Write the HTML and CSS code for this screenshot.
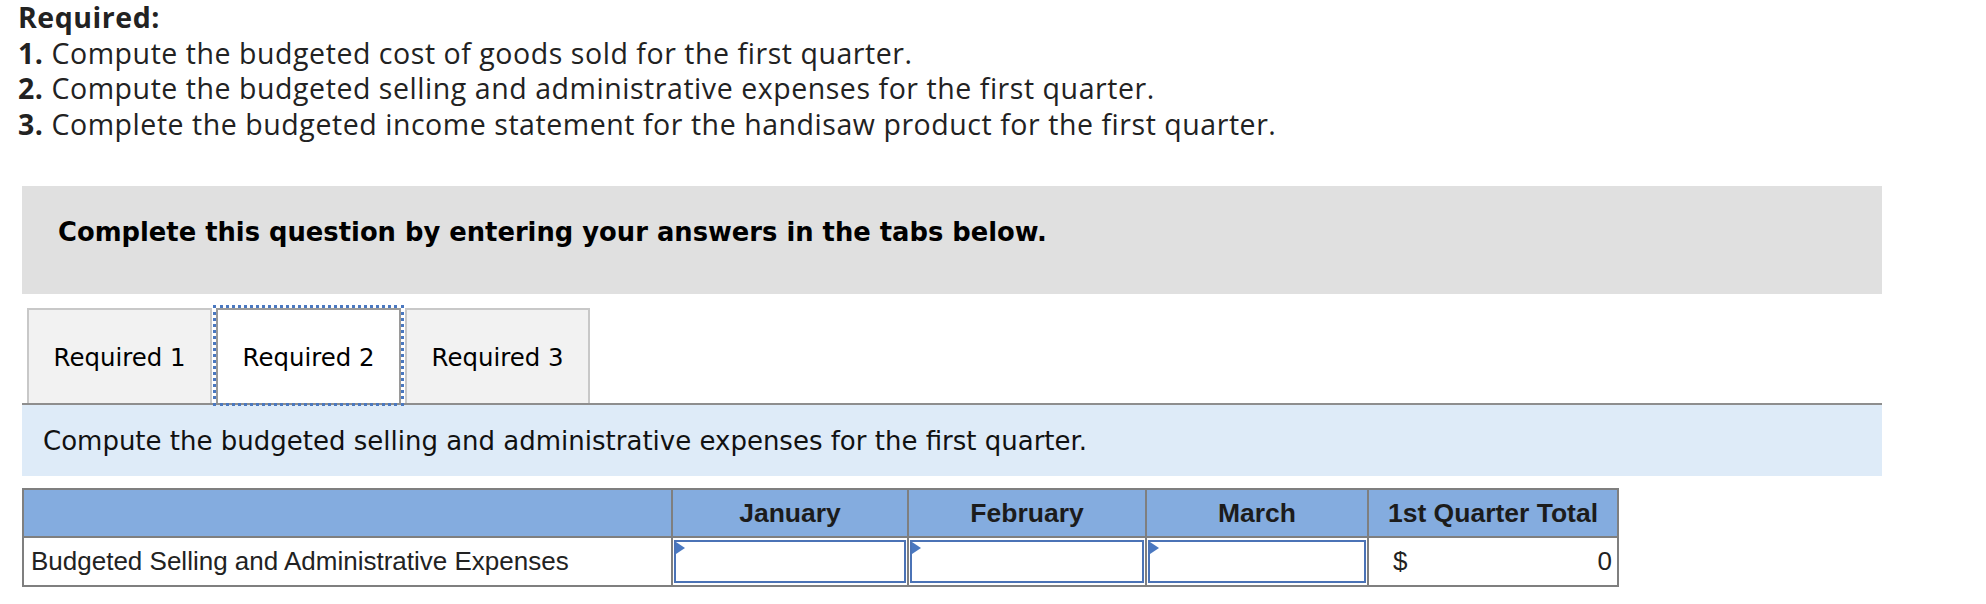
FILE: index.html
```html
<!DOCTYPE html>
<html>
<head>
<meta charset="utf-8">
<link rel="stylesheet" href="styles.css">
</head>
<body>
<div class="page">
  <div class="required">
    <div class="req-title">Required:</div>
    <div class="req-line"><b>1.</b> Compute the budgeted cost of goods sold for the first quarter.</div>
    <div class="req-line"><b>2.</b> Compute the budgeted selling and administrative expenses for the first quarter.</div>
    <div class="req-line"><b>3.</b> Complete the budgeted income statement for the handisaw product for the first quarter.</div>
  </div>
  <div class="notice">Complete this question by entering your answers in the tabs below.</div>
  <div class="tabs">
    <div class="tab">Required 1</div>
    <div class="tab active">Required 2</div>
    <div class="tab">Required 3</div>
  </div>
  <div class="band">Compute the budgeted selling and administrative expenses for the first quarter.</div>
  <table class="grid">
    <thead>
      <tr>
        <th class="c-label"></th>
        <th class="c-jan">January</th>
        <th class="c-feb">February</th>
        <th class="c-mar">March</th>
        <th class="c-tot">1st Quarter Total</th>
      </tr>
    </thead>
    <tbody>
      <tr>
        <td class="label">Budgeted Selling and Administrative Expenses</td>
        <td class="entry"><span class="field"></span></td>
        <td class="entry"><span class="field"></span></td>
        <td class="entry"><span class="field"></span></td>
        <td class="total"><div class="total-in"><span>$</span><span>0</span></div></td>
      </tr>
    </tbody>
  </table>
</div>
</body>
</html>
```

FILE: styles.css
```css
html, body {
  margin: 0;
  padding: 0;
  background: #ffffff;
}

.page {
  padding-left: 22px;
  width: 1860px;
}

.required {
  margin-left: -4px;
  font-family: "Open Sans", Lato, sans-serif;
  font-size: 28.5px;
  letter-spacing: 0.55px;
  line-height: 35.5px;
  color: #222222;
}

.req-title,
.req-line b {
  font-weight: 700;
}

.notice {
  margin-top: 44px;
  height: 108px;
  box-sizing: border-box;
  padding: 31px 36px 0;
  background: #e0e0e0;
  font-family: "DejaVu Sans", Verdana, sans-serif;
  font-weight: 700;
  font-size: 25.8px;
  line-height: 30px;
  color: #000000;
}

.tabs {
  display: flex;
  align-items: flex-end;
  margin-top: 14px;
  padding-left: 5px;
}

.tab {
  width: 185px;
  height: 95px;
  box-sizing: border-box;
  border: 2px solid #c8c8c8;
  border-bottom: none;
  background: #f2f2f2;
  display: flex;
  align-items: center;
  justify-content: center;
  padding-top: 2px;
  font-family: "DejaVu Sans", Verdana, sans-serif;
  font-size: 24.4px;
  color: #000000;
}

.tab.active {
  margin: 0 4px;
  background: #ffffff;
  border-color: #9a9a9a;
  outline: 3px dotted #4a78c0;
  outline-offset: 0;
  position: relative;
  z-index: 1;
}

.band {
  height: 73px;
  box-sizing: border-box;
  border-top: 2px solid #8e8e8e;
  background: #deebf8;
  padding-left: 21px;
  display: flex;
  align-items: center;
  font-family: "DejaVu Sans", Verdana, sans-serif;
  font-size: 26px;
  color: #111111;
}

.grid {
  margin-top: 12px;
  border-collapse: collapse;
  table-layout: fixed;
  border: 2px solid #7f7f7f;
  font-family: "Liberation Sans", Arial, sans-serif;
  font-size: 26px;
  color: #222222;
}

.grid th,
.grid td {
  border: 2px solid #7f7f7f;
  padding: 0;
}

.grid th {
  height: 46px;
  background: #84acdf;
  font-weight: 700;
  font-size: 26.5px;
  text-align: center;
  color: #1c1c1c;
}

.c-label { width: 647px; }
.c-jan { width: 234px; }
.c-feb { width: 236px; }
.c-mar { width: 220px; }
.c-tot { width: 248px; }

.grid td {
  height: 45px;
  background: #ffffff;
}

.grid td.label {
  padding-left: 7px;
  text-align: left;
}

.grid td.entry {
  padding: 1px;
}

.field {
  display: block;
  position: relative;
  height: 43px;
  box-sizing: border-box;
  border: 2px solid #4b73b6;
  background: #ffffff;
}

.field::before {
  content: "";
  position: absolute;
  top: 0;
  left: 0;
  border-left: 9px solid #4a78c0;
  border-top: 6px solid transparent;
  border-bottom: 6px solid transparent;
}

.total-in {
  display: flex;
  justify-content: space-between;
  padding: 0 5px 0 24px;
}
```
